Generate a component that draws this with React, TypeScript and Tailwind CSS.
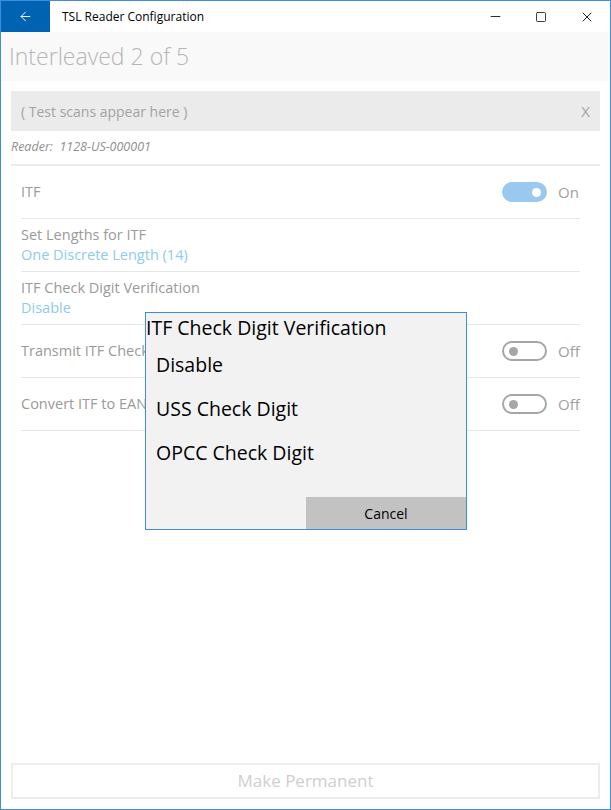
import { ArrowLeft, Minus, Square, X } from "lucide-react"

const font = { fontFamily: '"Open Sans", "Noto Sans", sans-serif' }

const Toggle = ({ on }: { on: boolean }) => (
    <div className="flex items-center gap-[11px]">
        {on ? (
            <div className="w-[45px] h-[20px] rounded-full bg-[#99c9ef] flex items-center justify-end pr-[6px]">
                <div className="w-[9px] h-[9px] rounded-full bg-white" />
            </div>
        ) : (
            <div className="w-[45px] h-[20px] rounded-full border-2 border-[#a6a6a6] flex items-center pl-[5px]">
                <div className="w-[9px] h-[9px] rounded-full bg-[#a6a6a6]" />
            </div>
        )}
        <span className="text-[15px] text-[#a0a0a0] w-[22px]">{on ? "On" : "Off"}</span>
    </div>
)

const Row = ({ label, value, toggle }: { label: string; value?: string; toggle?: boolean }) => (
    <div className="h-[53px] border-b border-[#e6e6e6] flex items-center justify-between">
        <div className="flex flex-col leading-[20px]">
            <span className="text-[14.5px] text-[#9a9a9a]">{label}</span>
            {value && <span className="text-[14.5px] text-[#8ecbee]">{value}</span>}
        </div>
        {toggle !== undefined && <Toggle on={toggle} />}
    </div>
)

export default function App() {
    return (
        <div style={font} className="relative w-[611px] h-[810px] bg-white border border-[#3c8fde] flex flex-col">
            <div className="h-[31px] flex items-center">
                <div className="w-[49px] h-full bg-[#0063b1] flex items-center justify-center">
                    <ArrowLeft className="text-white" size={15} strokeWidth={1.5} />
                </div>
                <span className="ml-[12px] text-[12px] text-black">TSL Reader Configuration</span>
                <div className="ml-auto flex items-center">
                    <div className="w-[46px] flex justify-center"><Minus size={15} strokeWidth={1.3} /></div>
                    <div className="w-[46px] flex justify-center"><Square size={12} strokeWidth={1.5} /></div>
                    <div className="w-[46px] flex justify-center"><X size={16} strokeWidth={1.3} /></div>
                </div>
            </div>
            <div className="h-[49px] bg-[#f9f9f9] flex items-center px-[8px]">
                <span className="text-[23px] font-light text-[#b5b5b5]">Interleaved 2 of 5</span>
            </div>
            <div className="px-[10px] flex flex-col">
                <div className="mt-[10px] h-[40px] bg-[#ebebeb] flex items-center justify-between px-[10px]">
                    <span className="text-[14px] text-[#a3a3a3]">( Test scans appear here )</span>
                    <span className="text-[15px] text-[#a3a3a3]">X</span>
                </div>
                <div className="h-[33px] flex items-center text-[12.5px] italic text-[#8f8f8f]">Reader:&nbsp; 1128-US-000001</div>
                <div className="h-[2px] bg-[#ececec]" />
                <div className="pl-[10px] pr-[20px] flex flex-col">
                    <Row label="ITF" toggle={true} />
                    <Row label="Set Lengths for ITF" value="One Discrete Length (14)" />
                    <Row label="ITF Check Digit Verification" value="Disable" />
                    <Row label="Transmit ITF Check Digit" toggle={false} />
                    <Row label="Convert ITF to EAN-13" toggle={false} />
                </div>
            </div>
            <div className="mt-auto mx-[10px] mb-[10px] h-[36px] border-2 border-[#ececec] flex items-center justify-center">
                <span className="text-[17px] text-[#cfcfcf]">Make Permanent</span>
            </div>

            <div className="absolute left-[144px] top-[311px] w-[322px] h-[218px] bg-[#f2f2f2] border border-[#3c8fde] flex flex-col">
                <div className="text-[19.5px] leading-[30px] text-black">ITF Check Digit Verification</div>
                <div className="flex flex-col pl-[10px]">
                    <div className="h-[44px] flex items-center text-[19.5px] text-black">Disable</div>
                    <div className="h-[44px] flex items-center text-[19.5px] text-black">USS Check Digit</div>
                    <div className="h-[44px] flex items-center text-[19.5px] text-black">OPCC Check Digit</div>
                </div>
                <div className="mt-auto flex justify-end">
                    <div className="w-[160px] h-[32px] bg-[#c2c2c2] flex items-center justify-center text-[14px] text-black">Cancel</div>
                </div>
            </div>
        </div>
    )
}
